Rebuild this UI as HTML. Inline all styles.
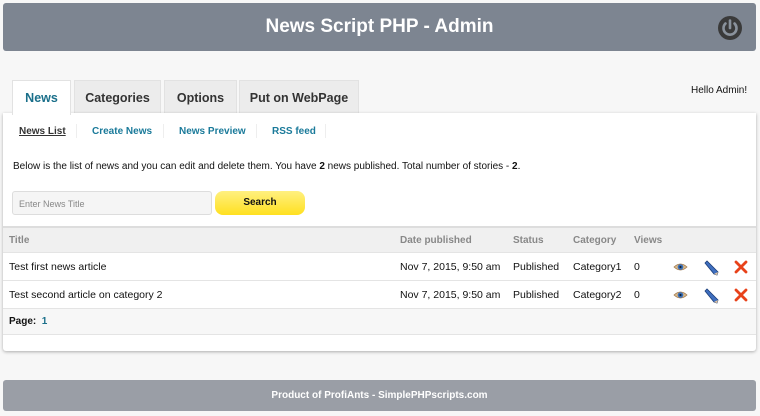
<!DOCTYPE html>
<html><head><style>
*{box-sizing:border-box;margin:0;padding:0}
body{width:760px;height:416px;background:#f7f7f7;font-family:"Liberation Sans",sans-serif;font-size:10.5px;color:#111;position:relative;overflow:hidden}
.hdr{position:absolute;left:3px;top:3px;width:753px;height:48px;background:#7d8591;border-radius:3px;color:#fff;font-weight:bold;font-size:19px;text-align:center;line-height:48px}
.pw{position:absolute;right:13px;top:12px}
.tab{position:absolute;top:80px;height:34px;background:#ececec;border:1px solid #e2e2e2;border-bottom:none;font-weight:bold;font-size:12.5px;color:#333;text-align:center;line-height:34px}
.tab.a{background:#fff;color:#1a6f8a;z-index:2;height:35px}
.hello{position:absolute;left:691px;top:85px;font-size:10px}
.panel{position:absolute;left:3px;top:113px;width:753px;height:238px;background:#fff;box-shadow:0 1px 3px rgba(0,0,0,.3);border-radius:0 0 3px 3px}
.sub{position:absolute;top:126px;font-weight:bold;font-size:10px;color:#1a7a9a}
.sep{position:absolute;top:124px;width:1px;height:14px;background:#eee}
.inp{position:absolute;left:12px;top:191px;width:200px;height:24px;background:#f5f5f5;border:1px solid #ddd;border-radius:3px;font-size:9px;color:#888;padding:7px 6px}
.btn{position:absolute;left:215px;top:191px;width:90px;height:24px;background:linear-gradient(#fff080,#ffe020);border-radius:8px;font-weight:bold;font-size:10px;text-align:center;line-height:24px}
.row{position:absolute;left:3px;width:753px;border-bottom:1px solid #e4e4e4}
.c{position:absolute;top:0}
.ic{position:absolute;top:7px}
</style></head><body>
<div class="hdr">News Script PHP - Admin
<svg class="pw" width="26" height="26" viewBox="0 0 26 26"><circle cx="13" cy="13" r="12" fill="#3a3a3a"/><path d="M8.5 8.5a6.5 6.5 0 1 0 9 0" stroke="#8a929c" stroke-width="2.6" fill="none" stroke-linecap="round"/><line x1="13" y1="5.5" x2="13" y2="13" stroke="#8a929c" stroke-width="2.6" stroke-linecap="round"/></svg></div>
<div class="tab a" style="left:12px;width:59px">News</div>
<div class="tab" style="left:74px;width:87px">Categories</div>
<div class="tab" style="left:164px;width:73px">Options</div>
<div class="tab" style="left:239px;width:120px">Put on WebPage</div>
<div class="hello">Hello Admin!</div>
<div class="panel"></div>
<div class="sub" style="left:19px;color:#333;text-decoration:underline">News List</div>
<div class="sep" style="left:76px"></div>
<div class="sub" style="left:92px">Create News</div>
<div class="sep" style="left:163px"></div>
<div class="sub" style="left:179px">News Preview</div>
<div class="sep" style="left:256px"></div>
<div class="sub" style="left:272px">RSS feed</div>
<div class="sep" style="left:325px"></div>
<div style="position:absolute;left:13px;top:161px;font-size:10px">Below is the list of news and you can edit and delete them. You have <b>2</b> news published. Total number of stories - <b>2</b>.</div>
<div class="inp">Enter News Title</div>
<div class="btn">Search</div>
<div class="row" style="top:226px;height:27px;background:#f0f0f0;border-top:2px solid #ddd;color:#888;font-weight:bold;line-height:25px;font-size:10px">
<span class="c" style="left:6px">Title</span><span class="c" style="left:397px">Date published</span><span class="c" style="left:510px">Status</span><span class="c" style="left:570px">Category</span><span class="c" style="left:631px">Views</span></div>
<div class="row" style="top:253px;height:28px;line-height:28px">
<span class="c" style="left:6px">Test first news article</span><span class="c" style="left:397px">Nov 7, 2015, 9:50 am</span><span class="c" style="left:510px">Published</span><span class="c" style="left:570px">Category1</span><span class="c" style="left:631px">0</span>
<svg class="ic" style="left:670px" width="15" height="14" viewBox="0 0 15 14"><path d="M1 7Q7.5 1 14 7Q7.5 13 1 7Z" fill="#d9b98a" stroke="#a07a50" stroke-width=".8"/><circle cx="7.5" cy="7" r="2.8" fill="#3a6fb8"/><circle cx="7.5" cy="7" r="1.1" fill="#123"/></svg>
<svg class="ic" style="left:700px" width="16" height="16" viewBox="0 0 16 16"><path d="M2 3L4 1L15 12L14 15L11 14Z" fill="#3f6fc0" stroke="#1d3f7a" stroke-width=".8"/><path d="M11 14L14 15L15 12" fill="#e9c9a0"/></svg>
<svg class="ic" style="left:731px" width="14" height="14" viewBox="0 0 14 14"><path d="M2 2L12 12M12 2L2 12" stroke="#e8421a" stroke-width="2.8" stroke-linecap="round"/></svg></div>
<div class="row" style="top:281px;height:28px;line-height:28px">
<span class="c" style="left:6px">Test second article on category 2</span><span class="c" style="left:397px">Nov 7, 2015, 9:50 am</span><span class="c" style="left:510px">Published</span><span class="c" style="left:570px">Category2</span><span class="c" style="left:631px">0</span>
<svg class="ic" style="left:670px" width="15" height="14" viewBox="0 0 15 14"><path d="M1 7Q7.5 1 14 7Q7.5 13 1 7Z" fill="#d9b98a" stroke="#a07a50" stroke-width=".8"/><circle cx="7.5" cy="7" r="2.8" fill="#3a6fb8"/><circle cx="7.5" cy="7" r="1.1" fill="#123"/></svg>
<svg class="ic" style="left:700px" width="16" height="16" viewBox="0 0 16 16"><path d="M2 3L4 1L15 12L14 15L11 14Z" fill="#3f6fc0" stroke="#1d3f7a" stroke-width=".8"/><path d="M11 14L14 15L15 12" fill="#e9c9a0"/></svg>
<svg class="ic" style="left:731px" width="14" height="14" viewBox="0 0 14 14"><path d="M2 2L12 12M12 2L2 12" stroke="#e8421a" stroke-width="2.8" stroke-linecap="round"/></svg></div>
<div class="row" style="top:309px;height:26px;background:#f7f7f7;line-height:26px;font-weight:bold;font-size:10px"><span class="c" style="left:6px">Page: &nbsp;<span style="color:#1a6f8a">1</span></span></div>
<div style="position:absolute;left:3px;top:380px;width:753px;height:31px;background:#9a9ea6;border-radius:3px;color:#fff;font-weight:bold;font-size:10px;text-align:center;line-height:31px">Product of ProfiAnts - SimplePHPscripts.com</div>
</body></html>
